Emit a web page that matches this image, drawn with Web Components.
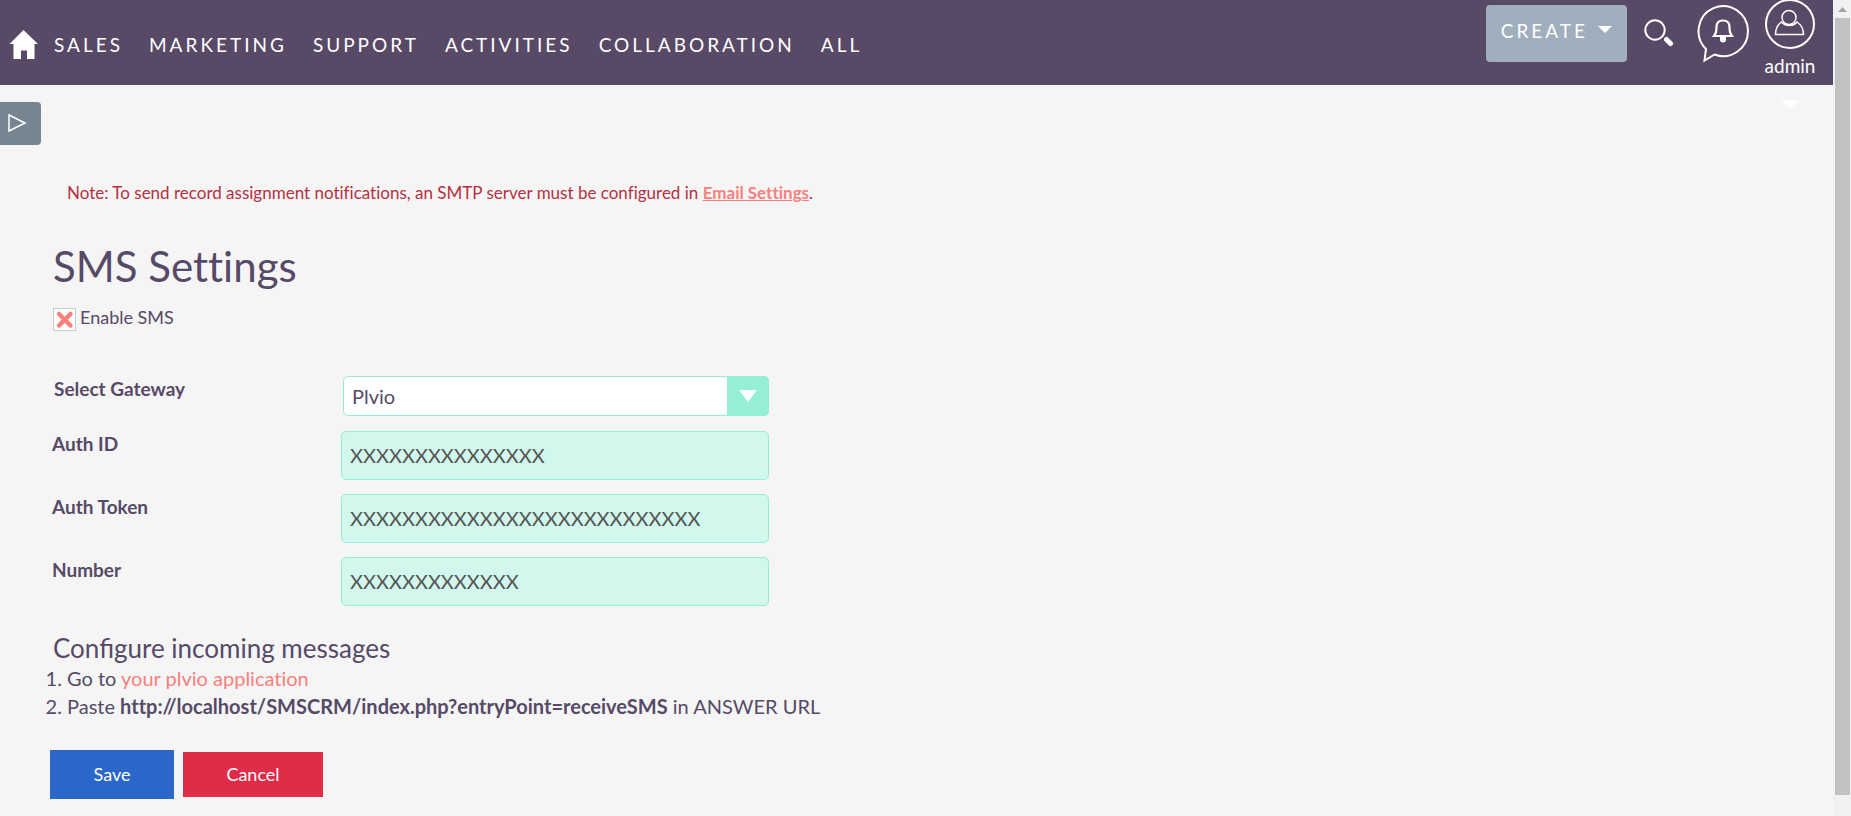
<!DOCTYPE html>
<html lang="en">
<head>
<meta charset="utf-8">
<title>SMS Settings</title>
<style>
  html, body {
    height: 100%;
  }

  body {
    margin: 0;
    overflow: hidden;
    background: #f5f5f5;
    color: #554a67;
    font-family: Lato, "Liberation Sans", sans-serif;
    font-size: 18px;
    font-variant-ligatures: none;
  }
</style>
</head>
<body>
<crm-page>
  <crm-header slot="header">
    <a href="#sales">SALES</a>
    <a href="#marketing">MARKETING</a>
    <a href="#support">SUPPORT</a>
    <a href="#activities">ACTIVITIES</a>
    <a href="#collaboration">COLLABORATION</a>
    <a href="#all">ALL</a>
    <user-menu slot="tools">admin</user-menu>
  </crm-header>
  <sidebar-toggle></sidebar-toggle>
  <sms-settings></sms-settings>
</crm-page>

<script>
// Small helper: every element clones its own template into an open shadow root
function attach(element, html) {
  const template = document.createElement('template');
  template.innerHTML = html;
  element.attachShadow({ mode: 'open' }).appendChild(template.content.cloneNode(true));
}

// Page frame with the scroll bar on the right
class CrmPage extends HTMLElement {
  constructor() {
    super();
    attach(this, `
      <style>
        :host {
          display: grid;
          grid-template-columns: 1fr 18px;
          height: 100%;
        }
        .content {
          min-width: 0;
        }
      </style>
      <div class="content">
        <slot name="header"></slot>
        <slot></slot>
      </div>
      <scroll-rail></scroll-rail>
    `);
  }
}

class ScrollRail extends HTMLElement {
  constructor() {
    super();
    attach(this, `
      <style>
        :host {
          display: flex;
          flex-direction: column;
          align-items: center;
          box-sizing: border-box;
          padding: 0 1px 0 2px;
          background: #f1f1f1;
        }
        svg {
          flex: none;
          display: block;
        }
        .thumb {
          align-self: stretch;
          flex: 1;
          background: #c1c1c1;
        }
        .end {
          height: 21px;
        }
      </style>
      <svg width="15" height="18" viewBox="0 0 15 18" aria-hidden="true">
        <path d="M3 12 L7.5 7 L12 12 Z" fill="#a3a3a3"/>
      </svg>
      <div class="thumb"></div>
      <div class="end"></div>
    `);
  }
}

// Top bar: home, module links, create, search, notifications, user
class CrmHeader extends HTMLElement {
  constructor() {
    super();
    attach(this, `
      <style>
        :host {
          display: flex;
          justify-content: space-between;
          height: 85px;
          background: #584a66;
          color: #fff;
        }
        nav {
          display: flex;
          align-items: center;
          gap: 26px;
          padding: 4px 0 0 8px;
        }
        .home {
          display: flex;
          margin-right: -10px;
        }
        ::slotted(a) {
          color: #fff;
          font-size: 19px;
          line-height: 24px;
          letter-spacing: 3px;
          text-decoration: none;
        }
        .tools {
          display: flex;
          align-items: flex-start;
        }
        button {
          margin: 0;
          padding: 0;
          border: none;
          background: none;
          color: #fff;
          font: inherit;
          cursor: pointer;
        }
        .create {
          display: flex;
          align-items: flex-start;
          gap: 10px;
          height: 57px;
          margin: 5px 17px 0 0;
          padding: 14px 15px 0 15px;
          border-radius: 4px;
          background: #a0aebe;
          font-size: 19px;
          line-height: 24px;
          letter-spacing: 3px;
        }
        .create svg {
          margin-top: 7px;
        }
        .search {
          margin: 18px 22px 0 0;
        }
        .alerts {
          margin: 3px 14px 0 0;
        }
        svg {
          display: block;
        }
      </style>
      <nav aria-label="Modules">
        <a class="home" href="#home" aria-label="Home">
          <svg width="30" height="30" viewBox="0 0 30 30">
            <path fill="#fff" d="M15.500 0 L30 14 H26.500 V29 H19 V20.500 H13 V29 H5.500 V14 H1.500 Z"/>
          </svg>
        </a>
        <slot></slot>
      </nav>
      <div class="tools">
        <button class="create" type="button">CREATE
          <svg width="14" height="8" viewBox="0 0 14 8" aria-hidden="true"><path d="M0 0 H14 L7 7 Z" fill="#fff"/></svg>
        </button>
        <button class="search" type="button" aria-label="Search">
          <svg width="30" height="30" viewBox="0 0 30 30" fill="none" stroke="#fff">
            <circle cx="11" cy="12" r="9.700" stroke-width="2"/>
            <path d="M22.500 21.500 L26.500 25.500" stroke-width="5" stroke-linecap="round"/>
          </svg>
        </button>
        <button class="alerts" type="button" aria-label="Notifications">
          <svg width="54" height="60" viewBox="0 0 54 60" fill="none" stroke="#fff" stroke-width="2">
            <path d="M18.500 51.500 A24.700 25 0 1 0 10 46 L8.500 57.500 Z"/>
            <path d="M18 33 C21 29 20.500 28 20.500 24 C20.500 19.500 23 17.500 27 17.500 C31 17.500 33.500 19.500 33.500 24 C33.500 28 33 29 36 33 Z" stroke-width="2.200"/>
            <path d="M24 34 V36 A3 3.500 0 0 0 30 36 V34 Z" fill="#fff" stroke="none"/>
            <circle cx="27" cy="36" r="3" fill="#fff" stroke="none"/>
          </svg>
        </button>
        <slot name="tools"></slot>
      </div>
    `);
  }
}

class UserMenu extends HTMLElement {
  constructor() {
    super();
    attach(this, `
      <style>
        :host {
          display: block;
          margin-right: 17px;
        }
        button {
          display: flex;
          flex-direction: column;
          align-items: center;
          margin: -2px 0 0;
          padding: 0;
          border: none;
          background: none;
          color: #fff;
          font: inherit;
          font-size: 19px;
          line-height: 24px;
          cursor: pointer;
        }
        .name {
          margin-top: 5px;
        }
        .caret {
          margin-top: 22px;
        }
      </style>
      <button type="button">
        <svg width="52" height="51" viewBox="0 0 52 51" fill="none" stroke="#fff" aria-hidden="true">
          <circle cx="26" cy="26" r="24" stroke-width="2"/>
          <circle cx="25" cy="19.500" r="7" stroke-width="1.500"/>
          <path d="M17.500 24 C13 27 11.500 31 11.500 36.500 H39.500 C39.500 31 37.500 27 33 24 C30 28.500 21 28.500 17.500 24 Z" stroke-width="1.500"/>
        </svg>
        <span class="name"><slot></slot></span>
        <svg class="caret" width="18" height="10" viewBox="0 0 18 10" aria-hidden="true"><path d="M0 0 H18 L9 9 Z" fill="#fff"/></svg>
      </button>
    `);
  }
}

class SidebarToggle extends HTMLElement {
  constructor() {
    super();
    attach(this, `
      <style>
        :host {
          display: block;
          padding-top: 17px;
        }
        button {
          display: flex;
          align-items: center;
          width: 41px;
          height: 43px;
          padding: 0 0 0 8px;
          border: none;
          border-radius: 0 4px 4px 0;
          background: #778591;
          cursor: pointer;
        }
      </style>
      <button type="button" aria-label="Toggle sidebar">
        <svg width="19" height="20" viewBox="0 0 19 20">
          <path d="M1 1 L17 9 L1 17 Z" fill="none" stroke="#fff" stroke-width="1.500"/>
        </svg>
      </button>
    `);
  }
}

// Check box drawn as a framed cross
class CheckField extends HTMLElement {
  constructor() {
    super();
    attach(this, `
      <style>
        :host {
          display: block;
        }
        label {
          display: flex;
          gap: 4px;
          font-size: 18px;
          line-height: 20px;
        }
        .box {
          display: grid;
          margin-top: 1px;
        }
        input, svg {
          grid-area: 1 / 1;
        }
        input {
          appearance: none;
          box-sizing: border-box;
          width: 23px;
          height: 23px;
          margin: 0;
          border: 1px solid #c3ccd6;
          background: #fff;
        }
        svg {
          display: none;
          pointer-events: none;
        }
        input:checked + svg {
          display: block;
        }
      </style>
      <label>
        <span class="box">
          <input type="checkbox" checked>
          <svg width="23" height="23" viewBox="0 0 23 23">
            <path d="M6 6 L17.500 17.500 M17.500 6 L6 17.500" stroke="#f8807c" stroke-width="4.500" stroke-linecap="round"/>
          </svg>
        </span>
        <slot></slot>
      </label>
    `);
  }
}

// Label and drop-down in one row
class SelectField extends HTMLElement {
  constructor() {
    super();
    attach(this, `
      <style>
        :host {
          display: grid;
          grid-template-columns: 289px 426px;
          padding: 0 0 1px 4px;
        }
        label {
          padding-top: 1px;
          font-size: 19px;
          font-weight: 700;
          line-height: 24px;
        }
        .control {
          display: grid;
          grid-template-columns: 1fr 42px;
        }
        select {
          grid-area: 1 / 1 / 2 / 3;
          appearance: none;
          box-sizing: border-box;
          height: 40px;
          margin: 0;
          padding: 0 50px 0 8px;
          border: 1px solid #95efd6;
          border-radius: 5px;
          background: #fff;
          color: #554a67;
          font: inherit;
          font-size: 20px;
        }
        .arrow {
          grid-area: 1 / 2;
          display: flex;
          align-items: center;
          justify-content: center;
          border-radius: 0 5px 5px 0;
          background: #95efd6;
          pointer-events: none;
        }
      </style>
      <label for="field">${this.getAttribute('label')}</label>
      <div class="control">
        <select id="field"><option>${this.getAttribute('value')}</option></select>
        <span class="arrow">
          <svg width="18" height="12" viewBox="0 0 18 12" aria-hidden="true"><path d="M0 0 H18 L9 12 Z" fill="#fff"/></svg>
        </span>
      </div>
    `);
  }
}

// Label and text box in one row
class TextField extends HTMLElement {
  constructor() {
    super();
    attach(this, `
      <style>
        :host {
          display: grid;
          grid-template-columns: 289px 428px;
          padding-left: 2px;
        }
        label {
          padding-top: 1px;
          font-size: 19px;
          font-weight: 700;
          line-height: 24px;
        }
        input {
          box-sizing: border-box;
          height: 49px;
          margin: 0;
          padding: 0 8px 2px;
          border: 1px solid #95efd6;
          border-radius: 5px;
          background: #d2f7ec;
          color: #555;
          font: inherit;
          font-size: 20px;
        }
      </style>
      <label for="field">${this.getAttribute('label')}</label>
      <input id="field" type="text" value="${this.getAttribute('value')}">
    `);
  }
}

class ActionButton extends HTMLElement {
  constructor() {
    super();
    attach(this, `
      <style>
        :host {
          display: block;
        }
        button {
          display: block;
          width: 124px;
          height: 49px;
          padding: 0 0 2px;
          border: none;
          background: #2b66c9;
          color: #fff;
          font: inherit;
          font-size: 18px;
          cursor: pointer;
        }
        :host([kind="danger"]) button {
          width: 140px;
          height: 45px;
          background: #e02c48;
        }
      </style>
      <button type="button"><slot></slot></button>
    `);
  }
}

class SmsSettings extends HTMLElement {
  constructor() {
    super();
    attach(this, `
      <style>
        :host {
          display: block;
          padding: 36px 50px 0;
        }
        a {
          color: #f8807c;
          text-decoration: none;
        }
        .note {
          margin: 0 0 0 17px;
          color: #b5303f;
          font-size: 17px;
          line-height: 24px;
        }
        .note a {
          font-weight: 700;
          text-decoration: underline;
        }
        h1 {
          margin: 35px 0 0 3px;
          font-size: 42px;
          font-weight: 400;
          line-height: 52px;
        }
        check-field {
          margin: 15px 0 0 3px;
        }
        .fields {
          display: grid;
          gap: 14px;
          margin-top: 45px;
        }
        h2 {
          margin: 26px 0 0 3px;
          font-size: 26px;
          font-weight: 400;
          font-variant-ligatures: normal;
          line-height: 32px;
        }
        ol {
          margin: 0;
          padding-left: 17px;
          font-size: 20px;
          line-height: 28px;
        }
        .actions {
          display: flex;
          align-items: center;
          gap: 9px;
          margin-top: 30px;
        }
      </style>
      <p class="note">Note: To send record assignment notifications, an SMTP server must be configured in <a href="#email-settings">Email Settings</a>.</p>
      <h1>SMS Settings</h1>
      <check-field>Enable SMS</check-field>
      <div class="fields">
        <select-field label="Select Gateway" value="Plvio"></select-field>
        <text-field label="Auth ID" value="XXXXXXXXXXXXXXX"></text-field>
        <text-field label="Auth Token" value="XXXXXXXXXXXXXXXXXXXXXXXXXXX"></text-field>
        <text-field label="Number" value="XXXXXXXXXXXXX"></text-field>
      </div>
      <h2>Configure incoming messages</h2>
      <ol>
        <li>Go to <a href="#plvio">your plvio application</a></li>
        <li>Paste <b>http://localhost/SMSCRM/index.php?entryPoint=receiveSMS</b> in ANSWER URL</li>
      </ol>
      <div class="actions">
        <action-button>Save</action-button>
        <action-button kind="danger">Cancel</action-button>
      </div>
    `);
  }
}

customElements.define('scroll-rail', ScrollRail);
customElements.define('crm-page', CrmPage);
customElements.define('crm-header', CrmHeader);
customElements.define('user-menu', UserMenu);
customElements.define('sidebar-toggle', SidebarToggle);
customElements.define('check-field', CheckField);
customElements.define('select-field', SelectField);
customElements.define('text-field', TextField);
customElements.define('action-button', ActionButton);
customElements.define('sms-settings', SmsSettings);
</script>
</body>
</html>
